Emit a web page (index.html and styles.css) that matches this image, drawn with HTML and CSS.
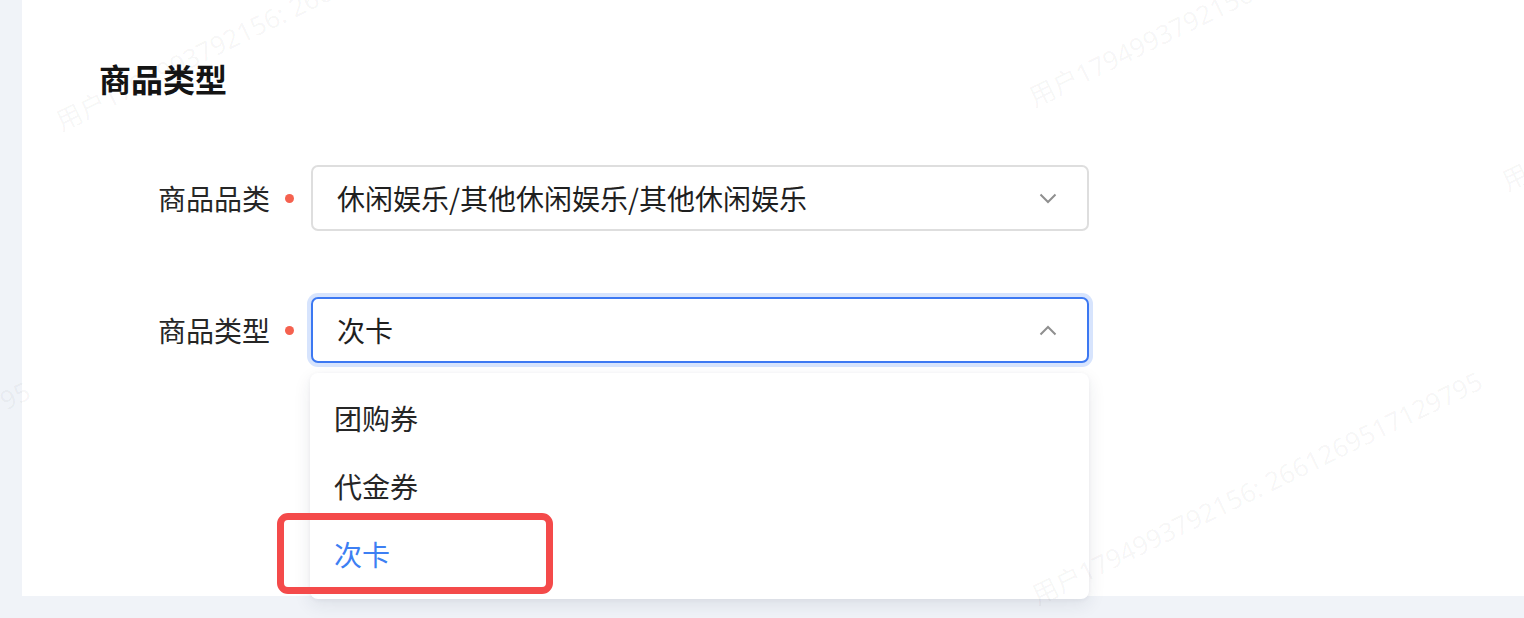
FILE: index.html
```html
<!DOCTYPE html>
<html lang="zh-CN">
<head>
<meta charset="utf-8">
<title>商品类型</title>
<link rel="stylesheet" href="styles.css">
</head>
<body>
<div class="page">
  <section class="panel">
    <h2 class="title">商品类型</h2>
    <div class="form">
      <div class="row">
        <label class="label">商品品类</label>
        <span class="req"><i></i></span>
        <div class="select">
          <span class="value">休闲娱乐/其他休闲娱乐/其他休闲娱乐</span>
          <svg class="chev" width="18" height="11" viewBox="0 0 18 11"><polyline points="1.5,1.5 9,9 16.5,1.5" fill="none" stroke="#8f8f8f" stroke-width="2"/></svg>
        </div>
      </div>
      <div class="row">
        <label class="label">商品类型</label>
        <span class="req"><i></i></span>
        <div class="select focus">
          <span class="value">次卡</span>
          <svg class="chev" width="18" height="11" viewBox="0 0 18 11"><polyline points="1.5,9.5 9,2 16.5,9.5" fill="none" stroke="#8f8f8f" stroke-width="2"/></svg>
          <ul class="menu">
            <li class="opt">团购券</li>
            <li class="opt">代金券</li>
            <li class="opt active">次卡<span class="mark"></span></li>
          </ul>
        </div>
      </div>
    </div>
  </section>
  <div class="wm wm1">用户1794993792156: 2661269517129795</div>
  <div class="wm wm2">用户1794993792156: 2661269517129795</div>
  <div class="wm wm3">用户1794993792156: 2661269517129795</div>
  <div class="wm wm4">用户1794993792156: 2661269517129795</div>
  <div class="wm wm5">用户1794993792156: 2661269517129795</div>
</div>
</body>
</html>
```

FILE: styles.css
```css
* { box-sizing: border-box; }
html, body { margin: 0; padding: 0; }
body {
  background: #f0f3f8;
  font-family: "Noto Sans CJK SC", "Noto Sans", sans-serif;
  color: #222;
  width: 1524px;
  height: 618px;
  overflow: hidden;
}
.page { position: relative; width: 1524px; height: 618px; overflow: hidden; }
.panel {
  margin-left: 22px;
  height: 596px;
  background: #fff;
  padding: 58px 0 0 77px;
}
.title {
  margin: 0;
  font-size: 32px;
  line-height: 40px;
  font-weight: 700;
  color: #141414;
}
.form {
  margin-top: 67px;
  display: flex;
  flex-direction: column;
  gap: 66px;
}
.row {
  display: flex;
  align-items: center;
  height: 66px;
}
.label {
  width: 171px;
  text-align: right;
  font-size: 28px;
  line-height: 40px;
  color: #262626;
}
.req {
  width: 41px;
  display: flex;
  justify-content: center;
}
.req i {
  display: block;
  width: 9px;
  height: 9px;
  border-radius: 50%;
  background: #f5614f;
  margin-right: 2px;
}
.select {
  position: relative;
  width: 778px;
  height: 66px;
  border: 2px solid #dedede;
  border-radius: 7px;
  display: flex;
  align-items: center;
  padding: 0 30px 0 24px;
  background: #fff;
}
.select.focus {
  border-color: #3c78f2;
  box-shadow: 0 0 0 4px #d7e4fd;
}
.value {
  flex: 1;
  font-size: 28px;
  line-height: 40px;
  color: #1f1f1f;
}
.chev { display: block; }
.menu {
  position: absolute;
  left: -3px;
  top: 74px;
  width: 779px;
  margin: 0;
  padding: 11px 0 11px;
  list-style: none;
  background: #fff;
  border-radius: 8px;
  box-shadow: 0 6px 18px rgba(30, 40, 70, 0.09), 0 1px 4px rgba(30, 40, 70, 0.05);
  z-index: 5;
}
.opt {
  position: relative;
  height: 68px;
  line-height: 68px;
  padding-left: 24px;
  font-size: 28px;
  color: #262626;
}
.opt.active { color: #3d7ff3; }
.mark {
  position: absolute;
  left: -33px;
  top: -7px;
  width: 276px;
  height: 81px;
  border: 7px solid #f44a4a;
  border-radius: 11px;
}
.wm {
  position: absolute;
  font-family: "Noto Sans", "Noto Sans CJK SC", sans-serif;
  font-size: 26px;
  line-height: 30px;
  white-space: nowrap;
  color: rgba(0, 0, 0, 0.045);
  transform-origin: 0 100%;
  transform: rotate(-26deg);
  pointer-events: none;
  z-index: 10;
}
.wm1 { left: 64px; top: 106px; }
.wm2 { left: 1037px; top: 82px; }
.wm3 { left: 1040px; top: 580px; }
.wm4 { left: -412px; top: 590px; }
.wm5 { left: 1510px; top: 166px; }
```
